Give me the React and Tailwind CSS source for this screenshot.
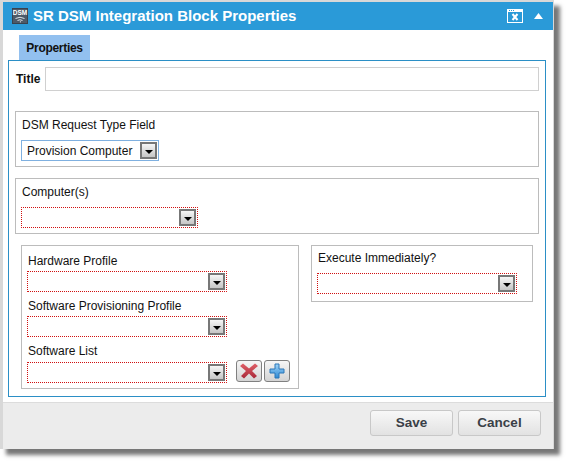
import React from 'react';

const Arrow = () => (
  <span className="flex h-[17px] w-[17px] flex-none items-center justify-center border-2 border-[#777777] bg-gradient-to-b from-[#f6f6f6] to-[#c6c6c6] pt-[3px]">
    <svg width="8" height="4" viewBox="0 0 8 4"><path d="M0 0H8L4 4Z" fill="#000" /></svg>
  </span>
);

// combo box, dotted red when empty
const Combo = ({ className, value, valid }) => (
  <div className={`flex h-[21px] items-center justify-between pr-px ${valid ? 'border border-[#7fb0e0]' : 'rounded-[1px] border border-dotted border-[#d01010]'} ${className}`}>
    <span className="whitespace-nowrap pl-[5px] text-[12px] leading-none text-[#111]">{value}</span>
    <Arrow />
  </div>
);

const DsmIcon = () => (
  <svg width="16" height="16" viewBox="0 0 16 16" className="flex-none">
    <rect x="0.5" y="0.5" width="15" height="15" fill="#4d5a68" stroke="#39424d" />
    <text x="8" y="7" textAnchor="middle" fontFamily="Liberation Sans" fontWeight="700" fontSize="6.5" fill="#fff">DSM</text>
    <path d="M3.5 10.5Q8 8 12.5 10.5M5.5 12.5Q8 11 10.5 12.5" fill="none" stroke="#dfe5ea" />
    <path d="M7.5 14L9 13V14.5Z" fill="#dfe5ea" />
  </svg>
);

const WindowIcon = () => (
  <svg width="16" height="14" viewBox="0 0 16 14">
    <path d="M0 0H16V14H0Z" fill="#fff" />
    <rect x="1" y="3" width="14" height="10" fill="#2a9ad8" />
    <path d="M2 1h1v1H2zM4 1h1v1H4zM6 1h1v1H6z" fill="#2a9ad8" />
    <path d="M5.5 5L10.5 11M10.5 5L5.5 11" stroke="#fff" strokeWidth="2" />
  </svg>
);

const Group = ({ className, children }) => (
  <div className={`border border-[#bcbcbc] ${className}`}>{children}</div>
);

const Label = ({ children }) => (
  <div className="ml-px text-[12px] leading-[14px] text-[#111]">{children}</div>
);

const IconButton = ({ children }) => (
  <button className="flex h-[22px] w-[26px] items-center justify-center rounded-[3px] border border-[#808080] bg-gradient-to-b from-[#f6f6f6] to-[#d4d4d4]">
    {children}
  </button>
);

const FooterButton = ({ children }) => (
  <button className="h-[26px] w-[83px] rounded-[3px] border border-[#c8c8c8] bg-gradient-to-b from-[#f8f8f8] to-[#e2e2e2] text-[13.5px] font-bold text-[#3a3f47]">
    {children}
  </button>
);

export default function App() {
  return (
    <div className="h-[465px] w-[569px] bg-white font-['Liberation_Sans',Arial,sans-serif]">
      <div className="h-[449px] w-[554px] border-l-[3px] border-r border-t-2 border-[#d8d8d8] bg-white shadow-[6px_6px_4px_#777]">
        <div className="flex h-[28px] items-center bg-[#2a9ad8] pl-[9px] pr-[10px]">
          <DsmIcon />
          <span className="ml-[5px] text-[15px] font-bold text-white">SR DSM Integration Block Properties</span>
          <div className="ml-auto flex items-center gap-[11px]">
            <WindowIcon />
            <svg width="9" height="6" viewBox="0 0 9 6"><path d="M4.5 0L9 6H0Z" fill="#fff" /></svg>
          </div>
        </div>

        <div className="h-[372px] px-[5px] pt-[5px]">
          <div className="ml-[11px] flex h-[25px] w-[71px] items-center justify-center bg-[#92c0ef] text-[12px] font-bold tracking-[-0.3px] text-[#111]">
            Properties
          </div>
          <div className="h-[337px] w-[538px] border border-[#2b8fc6] px-[6px] pt-[6px]">
            <div className="flex items-center">
              <span className="ml-[1px] text-[12px] font-bold text-[#111]">Title</span>
              <div className="ml-[5px] h-[24px] flex-1 border border-[#d0d0d0]" />
            </div>

            <Group className="mt-[20px] h-[56px] px-[5px] pt-[6px]">
              <Label>DSM Request Type Field</Label>
              <Combo className="mt-[8px] w-[138px]" value="Provision Computer" valid />
            </Group>

            <Group className="mt-[11px] h-[56px] px-[5px] pt-[6px]">
              <Label>Computer(s)</Label>
              <Combo className="mt-[8px] w-[177px]" />
            </Group>

            <div className="mt-[11px] flex items-start pl-[6px]">
              <Group className="h-[144px] w-[278px] px-[5px] pt-[8px]">
                <Label>Hardware Profile</Label>
                <Combo className="mt-[3px] w-[200px]" />
                <div className="mt-[7px]"><Label>Software Provisioning Profile</Label></div>
                <Combo className="mt-[3px] w-[200px]" />
                <div className="mt-[7px]"><Label>Software List</Label></div>
                <div className="mt-[4px] flex items-start">
                  <Combo className="w-[200px]" />
                  <div className="-mt-[2px] ml-[9px] flex gap-[2px]">
                    <IconButton>
                      <svg width="20" height="16" viewBox="0 0 20 16">
                        <defs>
                          <linearGradient id="redX" x1="0" y1="0" x2="0" y2="1">
                            <stop offset="0" stopColor="#e06068" />
                            <stop offset="1" stopColor="#a82838" />
                          </linearGradient>
                        </defs>
                        <path d="M1 3L4 0.5L10 5.5L16 0.5L19 3L13 8L18 13L15 15.5L10 10.5L5 15.5L2 13L7 8Z" fill="url(#redX)" />
                      </svg>
                    </IconButton>
                    <IconButton>
                      <svg width="16" height="16" viewBox="0 0 16 16">
                        <defs>
                          <linearGradient id="bluePlus" x1="0" y1="0" x2="0" y2="1">
                            <stop offset="0" stopColor="#a0d4f8" />
                            <stop offset="1" stopColor="#2f8ad4" />
                          </linearGradient>
                        </defs>
                        <path d="M6 1H10V6H15V10H10V15H6V10H1V6H6Z" fill="url(#bluePlus)" stroke="#2a76b8" />
                      </svg>
                    </IconButton>
                  </div>
                </div>
              </Group>
              <Group className="ml-[12px] h-[57px] w-[222px] px-[5px] pt-[5px]">
                <Label>Execute Immediately?</Label>
                <Combo className="mt-[8px] w-[200px]" />
              </Group>
            </div>
          </div>
        </div>

        <div className="flex h-[47px] items-start justify-end gap-[5px] border-t border-[#dcdcdc] bg-[#ececec] pr-[12px] pt-[7px]">
          <FooterButton>Save</FooterButton>
          <FooterButton>Cancel</FooterButton>
        </div>
      </div>
    </div>
  );
}
